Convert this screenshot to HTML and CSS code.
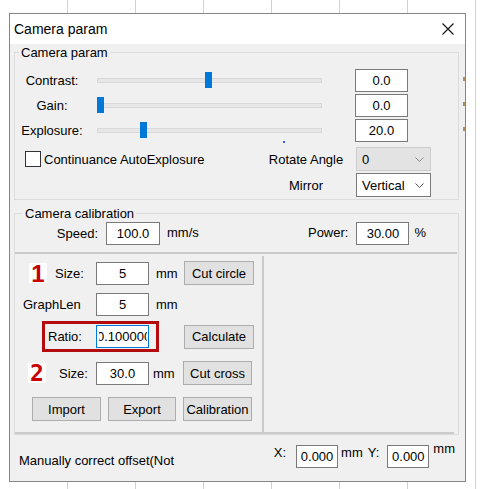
FILE: index.html
```html
<!DOCTYPE html>
<html>
<head>
<meta charset="utf-8">
<title>Camera param</title>
<link rel="stylesheet" href="styles.css">
</head>
<body>
<div class="dialog">
  <div class="titlebar">
    <span class="title">Camera param</span>
    <svg class="close" width="12" height="12" viewBox="0 0 12 12"><path d="M0.5 0.5L11.5 11.5M11.5 0.5L0.5 11.5" stroke="#111" stroke-width="1.1" fill="none"/></svg>
  </div>
  <div class="body">
    <fieldset class="group g1">
      <legend>Camera param</legend>
      <div class="srow">
        <span class="slabel">Contrast:</span>
        <div class="slider"><div class="track"></div><div class="thumb" style="left:108px"></div></div>
        <input class="field val" value="0.0" readonly>
        <span class="tick"></span>
      </div>
      <div class="srow">
        <span class="slabel">Gain:</span>
        <div class="slider"><div class="track"></div><div class="thumb" style="left:0px"></div></div>
        <input class="field val" value="0.0" readonly>
        <span class="tick"></span>
      </div>
      <div class="srow">
        <span class="slabel">Explosure:</span>
        <div class="slider"><div class="track"></div><div class="thumb" style="left:43px"></div><span class="dot"></span></div>
        <input class="field val" value="20.0" readonly>
        <span class="tick"></span>
      </div>
      <div class="orow first">
        <label class="check"><span class="box"></span><span class="ctext">Continuance AutoExplosure</span></label>
        <span class="olabel">Rotate Angle</span>
        <div class="combo disabled"><span>0</span><svg class="chev" width="9" height="5" viewBox="0 0 9 5"><path d="M0.5 0.5L4.5 4.5L8.5 0.5" stroke="#8a8a8a" fill="none"/></svg></div>
      </div>
      <div class="orow">
        <span class="olabel">Mirror</span>
        <div class="combo"><span>Vertical</span><svg class="chev" width="9" height="5" viewBox="0 0 9 5"><path d="M0.5 0.5L4.5 4.5L8.5 0.5" stroke="#555" fill="none"/></svg></div>
      </div>
    </fieldset>

    <fieldset class="group g2">
      <legend>Camera calibration</legend>
      <div class="speedrow">
        <span class="splabel">Speed:</span>
        <input class="field speed" value="100.0" readonly>
        <span class="unit mms">mm/s</span>
        <span class="pwlabel">Power:</span>
        <input class="field power" value="30.00" readonly>
        <span class="unit pct">%</span>
      </div>
      <div class="hsep"></div>
      <div class="panels">
        <div class="left">
          <div class="prow ra">
            <span class="num">1</span>
            <span class="plabel">Size:</span>
            <input class="field" value="5" readonly>
            <span class="punit">mm</span>
            <button class="btn">Cut circle</button>
          </div>
          <div class="prow rb">
            <span class="plabel">GraphLen</span>
            <input class="field" value="5" readonly>
            <span class="punit">mm</span>
          </div>
          <div class="prow rc">
            <div class="ratiobox">
              <span class="plabel">Ratio:</span>
              <div class="field ratio"><div class="clip"><span>0.1000000</span></div></div>
            </div>
            <button class="btn">Calculate</button>
          </div>
          <div class="prow rd">
            <span class="num">2</span>
            <span class="plabel">Size:</span>
            <input class="field" value="30.0" readonly>
            <span class="punit">mm</span>
            <button class="btn">Cut cross</button>
          </div>
          <div class="prow re">
            <button class="btn b1">Import</button>
            <button class="btn b2">Export</button>
            <button class="btn b3">Calibration</button>
          </div>
        </div>
        <div class="vsep"></div>
        <div class="right"></div>
      </div>
      <div class="hsep bottom"></div>
    </fieldset>

    <div class="offset">
      <span class="manual">Manually correct offset(Not</span>
      <span class="axis ax">X:</span>
      <input class="field small" value="0.000" readonly>
      <span class="ounit u1">mm</span>
      <span class="axis ay">Y:</span>
      <input class="field small" value="0.000" readonly>
      <span class="ounit u2">mm</span>
    </div>
  </div>
</div>
</body>
</html>
```

FILE: styles.css
```css
html {
  background: #fff;
}
body {
  margin: 0;
  height: 489px;
  overflow: hidden;
  background: repeating-linear-gradient(to right, transparent 0 67px, #d2d2d2 67px 68px);
  font-family: "Liberation Sans", Arial, sans-serif;
  font-size: 13px;
  color: #000;
}
.dialog {
  margin: 13px 0 0 9px;
  width: 457px;
  height: 469px;
  box-sizing: border-box;
  border: 1px solid #858585;
  background: #f0f0f0;
  display: flex;
  flex-direction: column;
}
.titlebar {
  height: 30px;
  flex: none;
  background: #fff;
  display: flex;
  align-items: center;
  padding-left: 4px;
}
.title {
  font-size: 14px;
  line-height: 16px;
}
.close {
  margin-left: auto;
  margin-right: 11px;
}
.body {
  flex: 1;
  position: relative;
}
.group {
  margin: 0 0 0 4px;
  width: 445px;
  box-sizing: border-box;
  padding: 0;
  border: 1px solid #dcdcdc;
  min-width: 0;
}
.group legend {
  padding: 0 2px;
  font-size: 13px;
  line-height: 15px;
}
.g1 {
  margin-top: 1px;
  padding: 9px 0 2px 0;
}
.g1 legend {
  margin-left: 4px;
}
.g2 {
  margin-top: 6px;
}
.g2 legend {
  margin-left: 8px;
}

/* slider rows */
.srow {
  display: flex;
  align-items: center;
  height: 23px;
  margin-bottom: 2px;
  position: relative;
}
.slabel {
  width: 74px;
  text-align: center;
}
.slider {
  margin-left: 8px;
  width: 225px;
  height: 23px;
  position: relative;
  display: flex;
  align-items: center;
}
.track {
  width: 100%;
  height: 5px;
  box-sizing: border-box;
  background: #e7e7e7;
  border: 1px solid #d8d8d8;
}
.thumb {
  position: absolute;
  top: 3px;
  width: 7px;
  height: 16px;
  background: #0078d7;
}
.dot {
  position: absolute;
  left: 186px;
  top: 22px;
  width: 2px;
  height: 2px;
  background: #3a5cff;
}
.tick {
  position: absolute;
  left: 448px;
  top: 8px;
  width: 2px;
  height: 4px;
  background: #b08a5a;
}
.field {
  box-sizing: border-box;
  width: 53px;
  height: 23px;
  border: 1px solid #7a7a7a;
  background: #fff;
  font-family: "Liberation Sans", Arial, sans-serif;
  font-size: 13px;
  color: #000;
  text-align: center;
  padding: 0;
  margin: 0;
  outline: none;
}
.val {
  margin-left: 33px;
}

/* option rows */
.orow {
  display: flex;
  align-items: center;
  height: 24px;
  margin-top: 2px;
  padding-right: 27px;
}
.orow.first {
  margin-top: 5px;
}
.check {
  display: flex;
  align-items: center;
  margin-left: 10px;
}
.box {
  width: 16px;
  height: 16px;
  box-sizing: border-box;
  border: 1px solid #333;
  background: #fff;
}
.ctext {
  margin-left: 3px;
}
.olabel {
  margin-left: auto;
  width: 80px;
  text-align: center;
}
.combo {
  margin-left: 10px;
  width: 75px;
  height: 24px;
  box-sizing: border-box;
  border: 1px solid #7a7a7a;
  background: #fff;
  display: flex;
  align-items: center;
  padding-left: 5px;
}
.combo.disabled {
  background: #e3e3e3;
  border-color: #cccccc;
  color: #000;
}
.chev {
  margin-left: auto;
  margin-right: 6px;
}

/* calibration */
.speedrow {
  display: flex;
  align-items: center;
  height: 23px;
  margin-top: 1px;
  padding-right: 32px;
}
.splabel {
  width: 83px;
  text-align: right;
}
.speed {
  margin-left: 8px;
  width: 54px;
}
.mms {
  margin-left: 7px;
  margin-top: -3px;
}
.pwlabel {
  margin-left: auto;
  margin-top: -2px;
}
.power {
  margin-left: 8px;
}
.pct {
  margin-left: 5px;
  margin-top: -2px;
}
.hsep {
  height: 2px;
  background: #cbcbcb;
  margin: 7px 1px 0 0;
}
.hsep.bottom {
  margin-top: 0;
  margin-right: 4px;
}
.panels {
  display: flex;
}
.left {
  width: 247px;
  padding: 7px 0 11px 0;
}
.vsep {
  width: 2px;
  background: #cbcbcb;
  margin-top: 2px;
}
.right {
  flex: 1;
}
.prow {
  display: flex;
  align-items: center;
  height: 24px;
}
.rb {
  margin-top: 8px;
  height: 23px;
}
.rc {
  margin-top: 5px;
  height: 31px;
}
.rd {
  margin-top: 9px;
}
.re {
  margin-top: 12px;
}
.num {
  width: 18px;
  height: 20px;
  background: #fff;
  color: #c80000;
  font-weight: bold;
  font-size: 24px;
  line-height: 21px;
  text-align: center;
}
.ra .num {
  margin-left: 14px;
}
.ra .plabel {
  margin-left: 8px;
  width: 41px;
}
.rb .plabel {
  margin-left: 8px;
  width: 73px;
}
.rd .num {
  margin-left: 13px;
  font-family: "DejaVu Sans Mono", monospace;
  font-size: 23px;
}
.rd .plabel {
  margin-left: 13px;
  width: 37px;
}
.punit {
  margin-left: 7px;
  width: 28px;
}
.rd .punit {
  margin-left: 4px;
  width: 30px;
}
.ratiobox {
  margin-left: 27px;
  height: 31px;
  box-sizing: border-box;
  border: 3px solid #b40c0c;
  display: flex;
  align-items: center;
  padding-right: 7px;
}
.ratiobox .plabel {
  margin-left: 3px;
  width: 48px;
}
.field.ratio {
  border-color: #0078d7;
  text-align: left;
  display: flex;
  align-items: center;
}
.clip {
  margin-left: 2px;
  width: 48px;
  overflow: hidden;
  white-space: nowrap;
  line-height: 21px;
}
.clip span {
  margin-left: -2px;
}
.btn {
  box-sizing: border-box;
  width: 70px;
  height: 24px;
  border: 1px solid #adadad;
  background: #e1e1e1;
  font-family: "Liberation Sans", Arial, sans-serif;
  font-size: 13px;
  color: #000;
  padding: 0;
  margin: 0;
}
.rc .btn {
  margin-left: 25px;
}
.rd .btn {
  width: 69px;
}
.re .b1 {
  margin-left: 17px;
  width: 69px;
}
.re .b2 {
  margin-left: 7px;
  width: 68px;
}
.re .b3 {
  margin-left: 7px;
  width: 69px;
}

/* bottom offset */
.offset {
  display: flex;
  align-items: center;
  height: 23px;
  margin-top: 10px;
  padding: 0 10px 0 9px;
}
.manual {
  align-self: flex-end;
  line-height: 15px;
}
.axis, .ounit {
  align-self: flex-start;
  line-height: 15px;
}
.ax {
  margin-left: auto;
  margin-right: 10px;
}
.field.small {
  width: 42px;
}
.u1 {
  margin-left: 3px;
}
.ay {
  margin-left: 5px;
  margin-right: 8px;
}
.u2 {
  margin-left: 4px;
  margin-top: -4px;
}
```
